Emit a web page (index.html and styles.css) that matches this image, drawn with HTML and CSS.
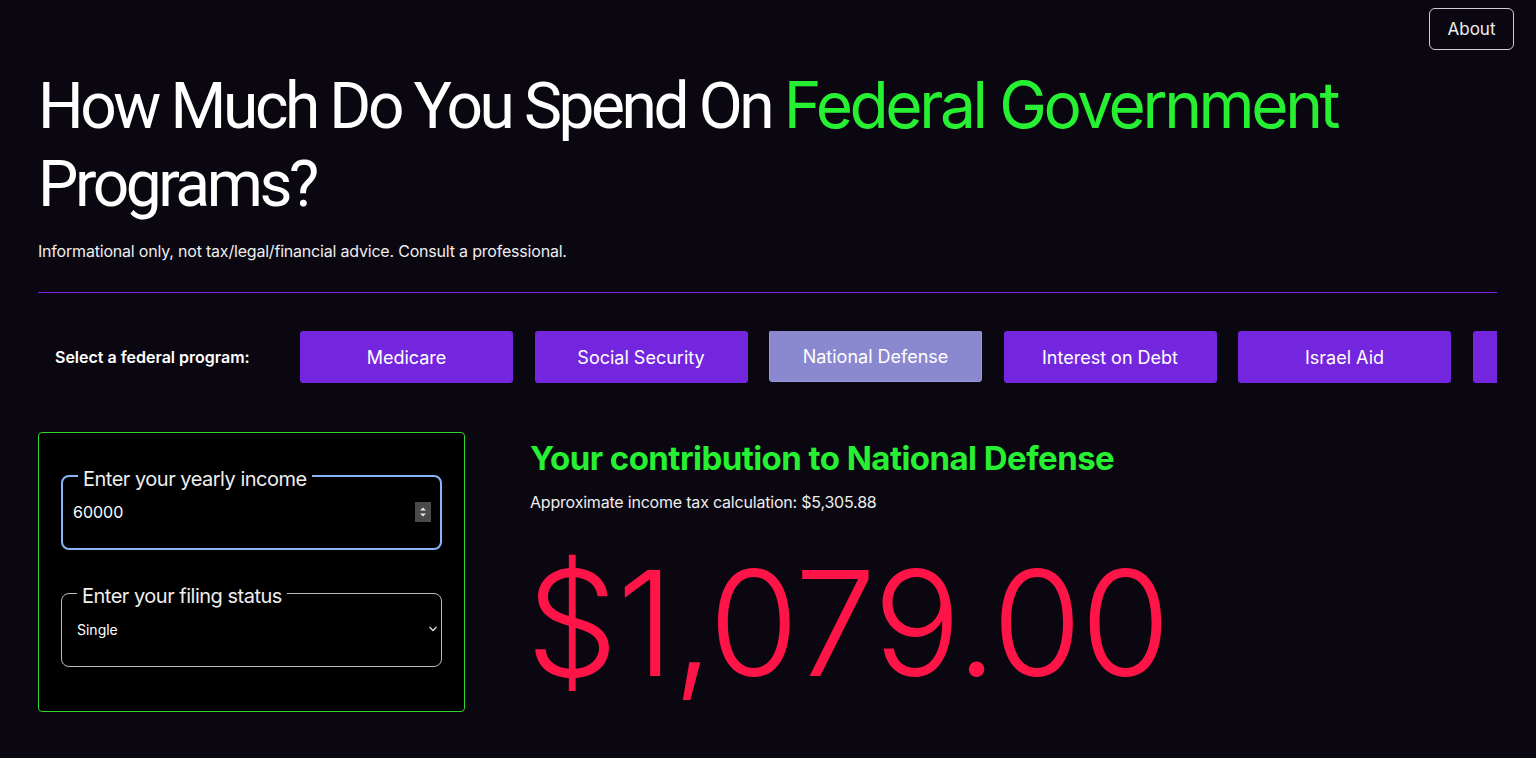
FILE: index.html
```html
<!DOCTYPE html>
<html lang="en">
<head>
<meta charset="UTF-8">
<meta name="viewport" content="width=device-width, initial-scale=1.0">
<title>How Much Do You Spend On Federal Government Programs?</title>
<link rel="stylesheet" href="styles.css">
</head>
<body>

<div class="topbar">
  <button class="about-btn">About</button>
</div>

<div class="container">
  <div class="header">
    <h1>How Much Do You Spend On <span class="accent">Federal Government</span> Programs?</h1>
    <p>Informational only, not tax/legal/financial advice. Consult a professional.</p>
  </div>

  <div class="program-row">
    <div class="program-label">Select a federal program:</div>
    <div class="program-list">
      <button class="program-btn">Medicare</button>
      <button class="program-btn">Social Security</button>
      <button class="program-btn active">National Defense</button>
      <button class="program-btn">Interest on Debt</button>
      <button class="program-btn">Israel Aid</button>
      <button class="program-btn">Medicaid</button>
    </div>
  </div>

  <div class="main">
    <div class="input-card">
      <fieldset class="field focused">
        <legend>Enter your yearly income</legend>
        <div class="field-row">
          <span class="field-value">60000</span>
          <span class="spinner">
            <svg width="10" height="14" viewBox="0 0 10 14"><path d="M2 5.5 L5 2.5 L8 5.5 Z M2 8.5 L5 11.5 L8 8.5 Z" fill="#e8e8e8"/></svg>
          </span>
        </div>
      </fieldset>
      <fieldset class="field">
        <legend>Enter your filing status</legend>
        <div class="field-row select-row">
          <span class="field-value small">Single</span>
          <svg width="10" height="8" viewBox="0 0 10 8"><path d="M1.5 2 L5 5.5 L8.5 2" fill="none" stroke="#ddd" stroke-width="1.3"/></svg>
        </div>
      </fieldset>
    </div>

    <div class="result">
      <h2>Your contribution to National Defense</h2>
      <p class="result-sub">Approximate income tax calculation: $5,305.88</p>
      <div class="amount">$1,079.00</div>
    </div>
  </div>
</div>

</body>
</html>
```

FILE: styles.css
```css
* {
  margin: 0;
  padding: 0;
  box-sizing: border-box;
  font-family: 'Inter', sans-serif;
}

body {
  background: #0b0711;
  color: #fff;
  min-height: 100vh;
  overflow: hidden;
}

.topbar {
  display: flex;
  justify-content: flex-end;
  padding: 8px 22px 0 0;
}

.about-btn {
  background: none;
  border: 1.5px solid #cfcfcf;
  border-radius: 6px;
  color: #eee;
  font-size: 17px;
  width: 85px;
  height: 42px;
  cursor: pointer;
}

.container {
  padding: 0 39px 0 38px;
}

.header h1 {
  font-family: 'Roboto', sans-serif;
  font-size: 64px;
  font-weight: 400;
  line-height: 78px;
  letter-spacing: -3.4px;
  margin-top: 16px;
}

.accent {
  color: #27f033;
}

.header p {
  font-size: 16px;
  line-height: 20px;
  margin-top: 17px;
  color: #eee;
  letter-spacing: -0.2px;
}

.program-row {
  border-top: 1px solid #7b22ee;
  margin-top: 31px;
  padding-top: 38px;
  display: flex;
  align-items: center;
}

.program-label {
  width: 262px;
  padding-left: 17px;
  font-weight: 600;
  font-size: 16px;
  flex-shrink: 0;
}

.program-list {
  display: flex;
  gap: 21.5px;
  overflow: hidden;
  flex: 1;
}

.program-btn {
  width: 213px;
  height: 52px;
  flex-shrink: 0;
  background: #7426de;
  color: #fff;
  border: none;
  border-radius: 3px;
  font-size: 18px;
  cursor: pointer;
}

.program-btn.active {
  background: #8a88cf;
  border: 1px solid #9a98d8;
  transform: translateY(-1px);
}

.main {
  display: flex;
  margin-top: 49px;
  gap: 65px;
}

.input-card {
  width: 427px;
  height: 280px;
  background: #000;
  border: 1px solid #2fd62f;
  border-radius: 4px;
  padding: 30px 22px 0 22px;
  flex-shrink: 0;
}

.field {
  border: 1px solid #bbb;
  border-radius: 8px;
  height: 87px;
  padding: 0 10px 0 10px;
  margin-bottom: 30px;
  display: flex;
  flex-direction: column;
  justify-content: center;
}

.field.focused {
  border: 2px solid #8ab4f8;
}

.field legend {
  font-size: 20px;
  color: #eee;
  padding: 6px 5px 0 5px;
  margin-left: 5px;
  line-height: 20px;
  letter-spacing: -0.5px;
}

.field-row {
  display: flex;
  align-items: center;
  justify-content: space-between;
  margin-top: -13px;
}

.field-value {
  font-size: 16px;
  color: #fff;
}

.field-value.small {
  font-size: 14px;
  padding-left: 5px;
}

.select-row {
  margin-right: -7px;
  margin-top: -14px;
}

.spinner {
  width: 16px;
  height: 20px;
  background: #4a4a4a;
  display: flex;
  align-items: center;
  justify-content: center;
  margin-right: -1px;
}

.result h2 {
  color: #27f033;
  font-size: 33px;
  font-weight: 700;
  letter-spacing: -0.55px;
  margin-top: 6px;
}

.result-sub {
  font-size: 16px;
  color: #eee;
  margin-top: 14px;
  letter-spacing: -0.2px;
}

.amount {
  color: #ff1447;
  font-size: 146px;
  font-weight: 300;
  letter-spacing: -1.5px;
  line-height: 1;
  margin-top: 38px;
  margin-left: -4px;
}
```
